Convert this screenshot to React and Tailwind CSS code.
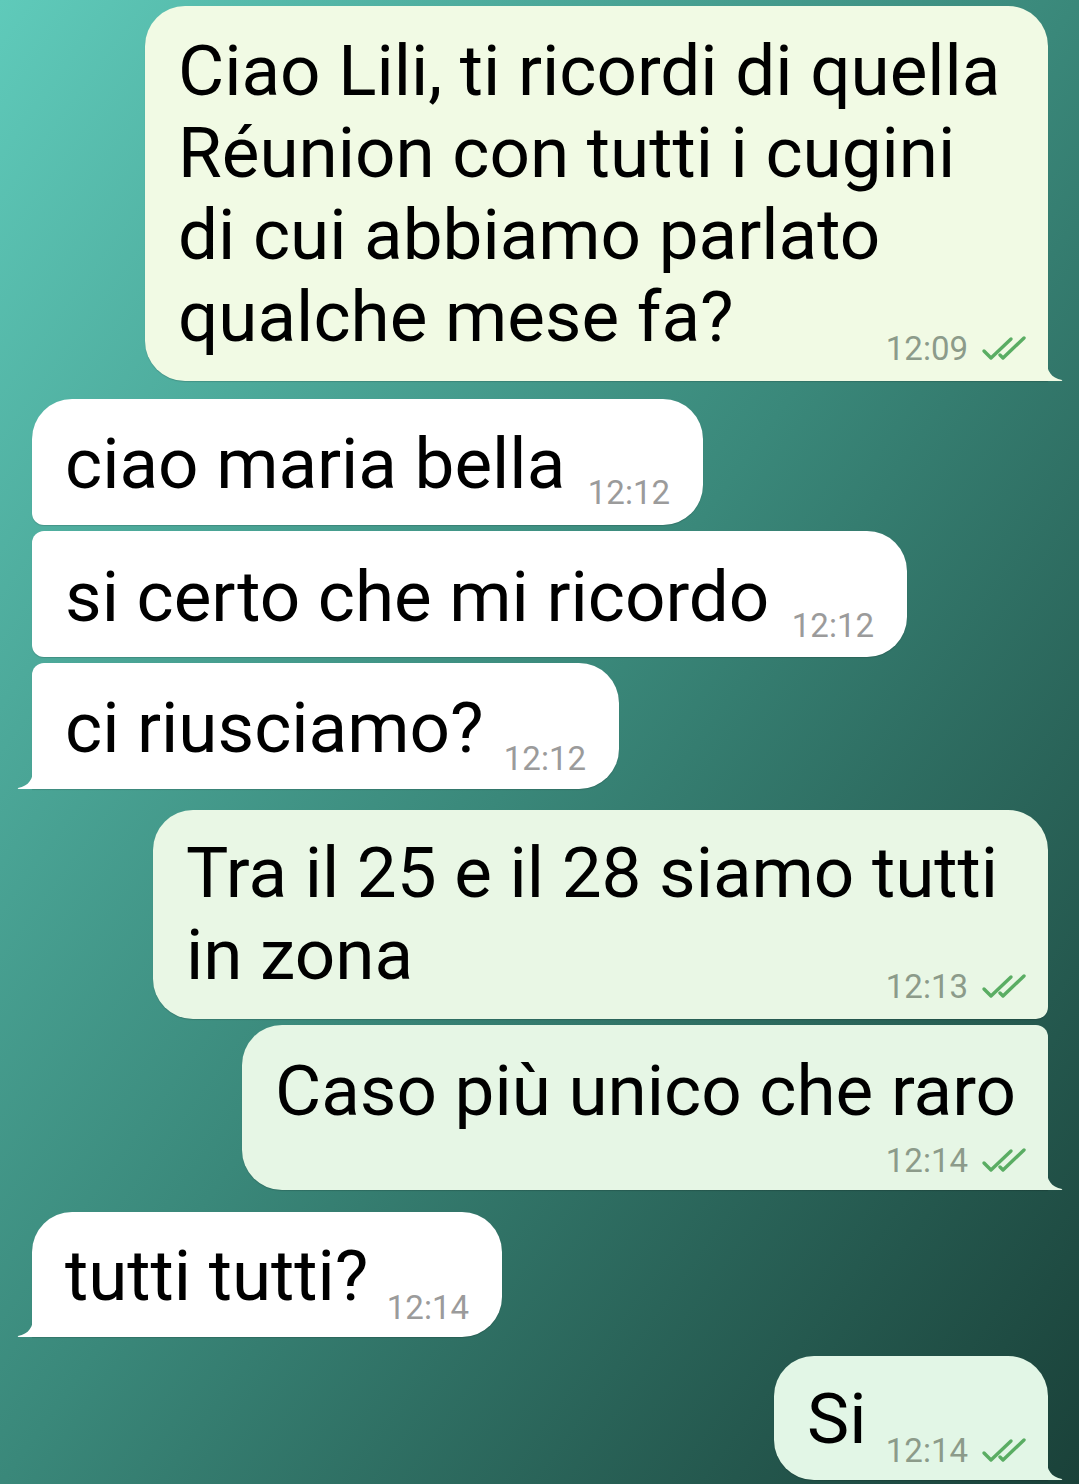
import React from 'react';

function Checks() {
  return (
    <svg width="48" height="28" viewBox="0 0 48 28" className="ml-[12px] mb-[4px]" fill="none" stroke="#5aad63" strokeWidth="3.4" strokeLinecap="round" strokeLinejoin="round">
      <path d="M4 17 L11 24 L31 5" />
      <path d="M20 21 L23 24 L44 4" />
    </svg>
  );
}

function Time({ t, out }) {
  return (
    <div className={`flex items-end shrink-0 text-[33px] leading-[34px] ${out ? 'text-[#8c9b8a]' : 'text-[#9b9b9b]'}`}>
      <span>{t}</span>
      {out && <Checks />}
    </div>
  );
}

function TailOut({ color }) {
  return (
    <svg width="17" height="22" viewBox="0 0 17 22" className="absolute right-[-15px] bottom-0">
      <path d="M0 0 C1 12 5 19 16 21 Q17 22 15 22 L0 22 Z" fill={color} />
    </svg>
  );
}

function TailIn() {
  return (
    <svg width="17" height="22" viewBox="0 0 17 22" className="absolute left-[-15px] bottom-0">
      <path d="M17 0 C16 12 12 19 1 21 Q0 22 2 22 L17 22 Z" fill="#ffffff" />
    </svg>
  );
}

export default function App() {
  return (
    <div className="min-h-[1484px] w-[1079px] overflow-hidden bg-linear-to-br from-[#5fcaba] via-[#3a887a] to-[#1a4139] font-['Roboto','Liberation_Sans',sans-serif] text-[71px] text-black flex flex-col pt-[6px]">
      {/* 1 */}
      <div className="self-end mr-[31px] relative w-[903px] bg-[#f1fae4] rounded-[40px] rounded-br-none pl-[33px] pr-[20px] pt-[24px] pb-[15px] flex flex-col shadow-[0_1px_1px_rgba(0,0,0,0.15)]">
        <div className="leading-[82px]">
          Ciao Lili, ti ricordi di quella<br />Réunion con tutti i cugini<br />di cui abbiamo parlato<br />qualche mese fa?
        </div>
        <div className="self-end -mt-[26px]"><Time t="12:09" out /></div>
        <TailOut color="#f1fae4" />
      </div>

      {/* 2 */}
      <div className="mt-[18px] ml-[32px] w-[671px] bg-white rounded-[40px] rounded-bl-[12px] pl-[33px] pr-[33px] pt-[24px] pb-[20px] flex items-end justify-between shadow-[0_1px_1px_rgba(0,0,0,0.15)]">
        <div className="leading-[82px]">ciao maria bella</div>
        <div className="-mb-[5px]"><Time t="12:12" /></div>
      </div>

      {/* 3 */}
      <div className="mt-[6px] ml-[32px] w-[875px] bg-white rounded-[40px] rounded-l-[12px] pl-[33px] pr-[33px] pt-[25px] pb-[19px] flex items-end justify-between shadow-[0_1px_1px_rgba(0,0,0,0.15)]">
        <div className="leading-[82px]">si certo che mi ricordo</div>
        <div className="-mb-[5px]"><Time t="12:12" /></div>
      </div>

      {/* 4 */}
      <div className="mt-[6px] ml-[32px] relative w-[587px] bg-white rounded-[40px] rounded-tl-[12px] rounded-bl-none pl-[33px] pr-[33px] pt-[24px] pb-[20px] flex items-end justify-between shadow-[0_1px_1px_rgba(0,0,0,0.15)]">
        <div className="leading-[82px]">ci riusciamo?</div>
        <div className="-mb-[7px]"><Time t="12:12" /></div>
        <TailIn />
      </div>

      {/* 5 */}
      <div className="mt-[21px] self-end mr-[31px] w-[895px] bg-[#e9f7e5] rounded-[40px] rounded-br-[12px] pl-[33px] pr-[20px] pt-[22px] pb-[15px] flex flex-col shadow-[0_1px_1px_rgba(0,0,0,0.15)]">
        <div className="leading-[82px]">
          Tra il 25 e il 28 siamo tutti<br />in zona
        </div>
        <div className="self-end -mt-[26px]"><Time t="12:13" out /></div>
      </div>

      {/* 6 */}
      <div className="mt-[6px] self-end mr-[31px] relative w-[806px] bg-[#e6f6e5] rounded-[40px] rounded-tr-[12px] rounded-br-none pl-[33px] pr-[20px] pt-[25px] pb-[12px] flex flex-col shadow-[0_1px_1px_rgba(0,0,0,0.15)]">
        <div className="leading-[82px]">Caso più unico che raro</div>
        <div className="self-end mt-[12px]"><Time t="12:14" out /></div>
        <TailOut color="#e6f6e5" />
      </div>

      {/* 7 */}
      <div className="mt-[22px] ml-[32px] relative w-[470px] bg-white rounded-[40px] rounded-bl-none pl-[33px] pr-[33px] pt-[23px] pb-[20px] flex items-end justify-between shadow-[0_1px_1px_rgba(0,0,0,0.15)]">
        <div className="leading-[82px]">tutti tutti?</div>
        <div className="-mb-[8px]"><Time t="12:14" /></div>
        <TailIn />
      </div>

      {/* 8 */}
      <div className="mt-[19px] self-end mr-[31px] relative w-[274px] bg-[#e2f6e6] rounded-[40px] rounded-br-none pl-[33px] pr-[20px] pt-[22px] pb-[20px] flex items-end justify-between shadow-[0_1px_1px_rgba(0,0,0,0.15)]">
        <div className="leading-[82px]">Si</div>
        <div className="-mb-[8px]"><Time t="12:14" out /></div>
        <TailOut color="#e2f6e6" />
      </div>
    </div>
  );
}
